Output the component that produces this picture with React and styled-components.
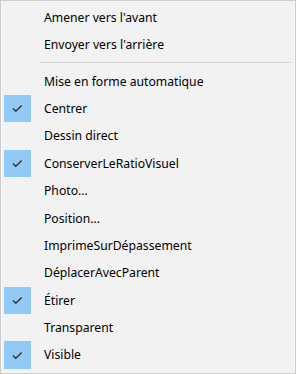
import React from "react";
import styled, { createGlobalStyle } from "styled-components";

const Global = createGlobalStyle`
  html, body { margin: 0; padding: 0; background: #ffffff; }
  * { box-sizing: border-box; }
`;

const Menu = styled.div`
  width: 296px;
  height: 374px;
  background: #f2f2f2;
  border: 1px solid #cccccc;
  box-shadow: inset 0 0 0 1px #f6f6f6;
  padding: 2.5px 2px 0 3px;
  display: flex;
  flex-direction: column;
  font-family: "Noto Sans", "Open Sans", sans-serif;
  font-size: 12.2px;
  color: #000;
`;

const Item = styled.div`
  height: 27.4px;
  display: flex;
  align-items: center;
  flex-shrink: 0;
`;

const Gutter = styled.div`
  width: 27px;
  height: 100%;
  margin-right: 13px;
  display: flex;
  align-items: center;
  justify-content: center;
  background: ${(p) => (p.$checked ? "#91c9f7" : "transparent")};
`;

const Label = styled.span`
  white-space: nowrap;
  line-height: 1;
  padding-top: 1px;
`;

const Separator = styled.div`
  height: 9.2px;
  flex-shrink: 0;
  display: flex;
  align-items: center;
  padding-left: 35px;
  padding-right: 2px;
  &::after {
    content: "";
    display: block;
    width: 100%;
    height: 1px;
    background: #d7d7d7;
  }
`;

const Check = () => (
  <svg width="11" height="9" viewBox="0 0 11 9">
    <path d="M1 4.5 L3.8 7.3 L9.6 1.5" fill="none" stroke="#333" strokeWidth="1.4" />
  </svg>
);

const groupA = ["Amener vers l'avant", "Envoyer vers l'arrière"];
const groupB = [
  ["Mise en forme automatique", false],
  ["Centrer", true],
  ["Dessin direct", false],
  ["ConserverLeRatioVisuel", true],
  ["Photo...", false],
  ["Position...", false],
  ["ImprimeSurDépassement", false],
  ["DéplacerAvecParent", false],
  ["Étirer", true],
  ["Transparent", false],
  ["Visible", true],
];

export default function App() {
  return (
    <>
      <Global />
      <Menu>
        {groupA.map((t) => (
          <Item key={t}>
            <Gutter />
            <Label>{t}</Label>
          </Item>
        ))}
        <Separator />
        {groupB.map(([t, c]) => (
          <Item key={t}>
            <Gutter $checked={c}>{c && <Check />}</Gutter>
            <Label>{t}</Label>
          </Item>
        ))}
      </Menu>
    </>
  );
}
